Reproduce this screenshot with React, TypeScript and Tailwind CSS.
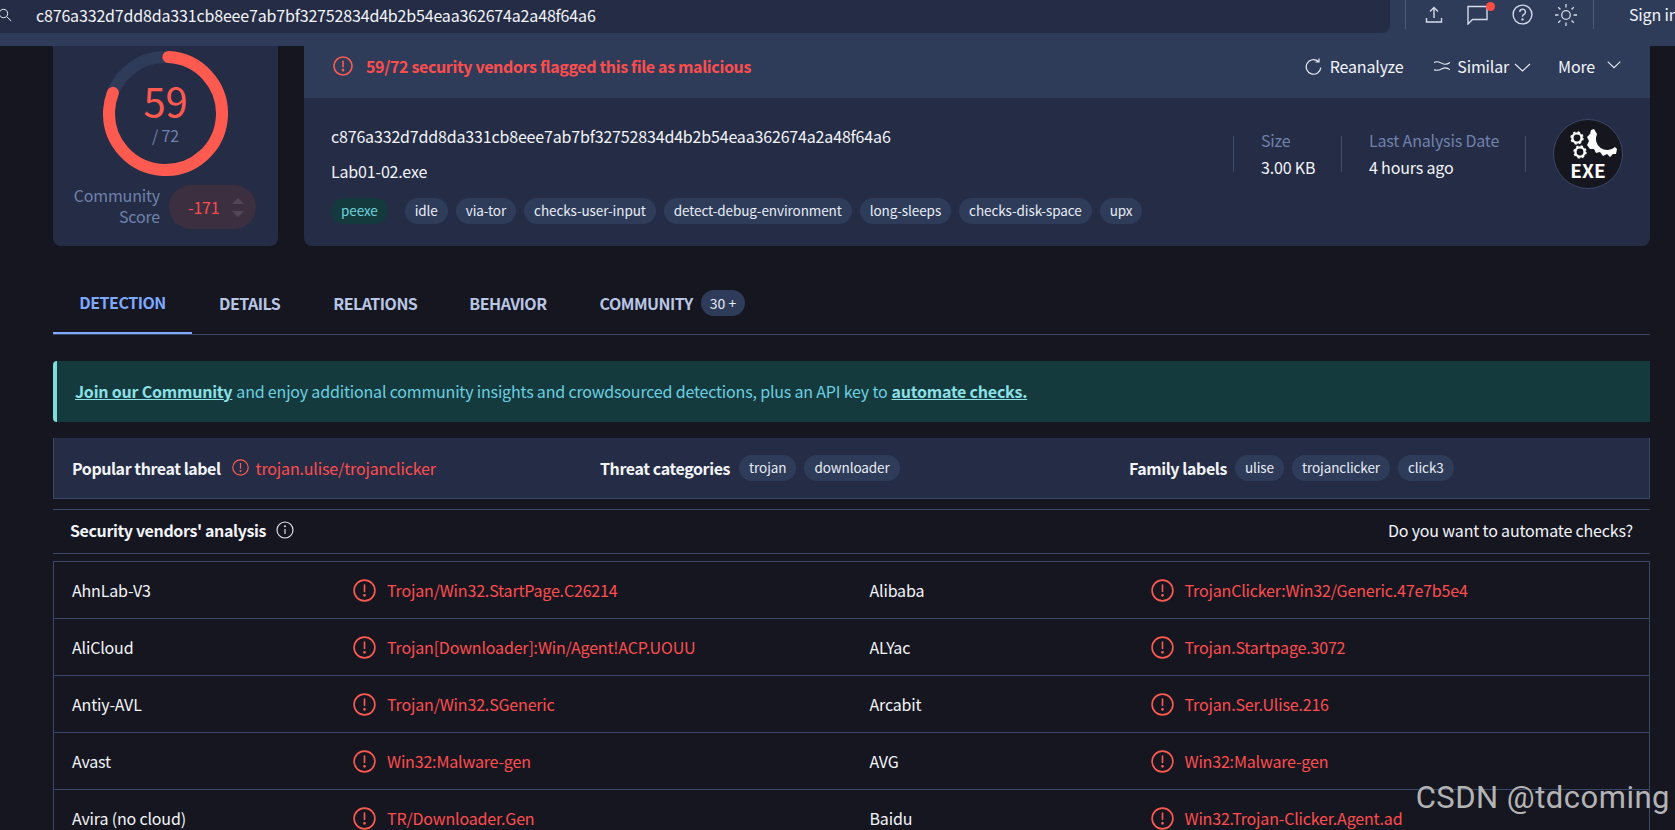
import React from "react";

const font = { fontFamily: '"Noto Sans CJK SC", "Noto Sans", sans-serif' };
const hash = "c876a332d7dd8da331cb8eee7ab7bf32752834d4b2b54eaa362674a2a48f64a6";

function Alert({ size = 23, sw = 1.6 }: { size?: number; sw?: number }) {
  return (
    <svg width={size} height={size} viewBox="0 0 23 23" fill="none" stroke="#ff5a50" strokeWidth={sw * 23 / size} className="shrink-0">
      <circle cx="11.5" cy="11.5" r="10.4" />
      <path d="M11.5 6v6.5" strokeLinecap="round" />
      <circle cx="11.5" cy="16.3" r="0.6" fill="#ff5a50" />
    </svg>
  );
}

function Tag({ children, teal }: { children: React.ReactNode; teal?: boolean }) {
  return (
    <span className={`flex h-[26px] items-center rounded-full px-[10px] text-[13.5px] leading-none tracking-[-0.09px] ${teal ? "bg-[#153a3e] text-[#6fd3dc]" : "bg-[#2e3c5a] text-[#e8ecf5]"}`}>
      {children}
    </span>
  );
}

const rows = [
  ["AhnLab-V3", "Trojan/Win32.StartPage.C26214", "Alibaba", "TrojanClicker:Win32/Generic.47e7b5e4"],
  ["AliCloud", "Trojan[Downloader]:Win/Agent!ACP.UOUU", "ALYac", "Trojan.Startpage.3072"],
  ["Antiy-AVL", "Trojan/Win32.SGeneric", "Arcabit", "Trojan.Ser.Ulise.216"],
  ["Avast", "Win32:Malware-gen", "AVG", "Win32:Malware-gen"],
  ["Avira (no cloud)", "TR/Downloader.Gen", "Baidu", "Win32.Trojan-Clicker.Agent.ad"],
];

function Cell({ name, result }: { name: string; result: string }) {
  return (
    <div className="flex items-center pl-[18px]">
      <span className="w-[281px] text-[#f2f4f8]">{name}</span>
      <Alert />
      <span className="ml-[11px] text-[#ff4d4d]">{result}</span>
    </div>
  );
}

function TopBar() {
  return (
    <header className="flex h-[46px] shrink-0 items-start overflow-hidden bg-[#2e3c5a]">
      <div className="flex h-[33px] w-[1390px] shrink-0 items-center rounded-br-lg bg-[#252c45] pb-[4px] text-[16px] text-[#f2f4f8]">
        <svg width="14" height="14" viewBox="0 0 14 14" fill="none" stroke="#e8ecf5" strokeWidth="1" className="-ml-[2px] mr-[24px]">
          <circle cx="5.5" cy="5.5" r="4.2" />
          <path d="M8.6 8.6l4.6 4.4" />
        </svg>
        <span>{hash}</span>
      </div>
      <div className="ml-[15px] flex h-[29px] shrink-0 items-center border-x border-[#4a5a7d] text-[#e8ecf5]">
        <div className="flex w-[187px] items-center pl-[18px]">
          <svg width="20" height="20" viewBox="0 0 20 20" fill="none" stroke="#d5dbe8" strokeWidth="1.4">
            <path d="M10 13V3M6 6.5L10 2.6l4 3.9M2.500 13v4h15v-4" />
          </svg>
          <span className="relative ml-[23px] block h-[20px] w-[22px]">
            <svg width="22" height="20" viewBox="0 0 22 20" fill="none" stroke="#d5dbe8" strokeWidth="1.4" className="absolute left-0 top-0">
              <path d="M1 1.500h19v13H5.500L1 19z" />
            </svg>
            <span className="absolute -right-[6px] -top-[3px] h-[9px] w-[9px] rounded-full bg-[#ff4d43]" />
          </span>
          <svg width="21" height="21" viewBox="0 0 21 21" fill="none" stroke="#d5dbe8" strokeWidth="1.4" className="ml-[23px]">
            <circle cx="10.5" cy="10.5" r="9.4" />
            <path d="M7.800 8a2.800 2.800 0 1 1 4.200 2.400c-1 .6-1.500 1.100-1.500 2.300" />
            <circle cx="10.5" cy="15.4" r=".5" fill="#d5dbe8" />
          </svg>
          <svg width="24" height="24" viewBox="0 0 24 24" fill="none" stroke="#d5dbe8" strokeWidth="1.3" className="ml-[21px]">
            <circle cx="12" cy="12" r="4.3" />
            <path d="M12 1v3.500M12 19.500V23M1 12h3.500M19.500 12H23M4.200 4.200L6.500 6.500M17.500 17.500l2.300 2.300M4.200 19.800l2.300-2.300M17.500 6.500l2.300-2.300" />
          </svg>
        </div>
      </div>
      <span className="ml-[35px] mt-[1px] shrink-0 whitespace-nowrap text-[16px] leading-[27px] text-[#f2f4f8]">Sign in</span>
    </header>
  );
}

function ScoreCard() {
  const r = 56.5;
  const c = 2 * Math.PI * r;
  return (
    <section className="flex w-[225px] shrink-0 flex-col items-center rounded-b-lg bg-[#252c45]">
      <div className="relative mt-[5px] h-[125px] w-[125px]">
        <svg width="125" height="125" viewBox="0 0 125 125" fill="none" strokeWidth="12">
          <circle cx="62.500" cy="62.500" r={r} stroke="#2e3c5a" />
          <circle cx="62.500" cy="62.500" r={r} stroke="#ff5a50" strokeLinecap="round" strokeDasharray={`${c * 0.8}  ${c}`} transform="rotate(-87 62.500 62.500)" />
        </svg>
        <div className="absolute inset-0 flex flex-col items-center">
          <span className="mt-[29px] text-[40px] leading-[40px] text-[#ff5a50]">59</span>
          <span className="mt-[5px] text-[16px] leading-[20px] text-[#6f82ad]">/ 72</span>
        </div>
      </div>
      <div className="mt-[9px] flex w-full items-center">
        <div className="-mt-[2px] w-[107px] text-right text-[16px] leading-[21px] text-[#6f82ad]">
          Community<br />Score
        </div>
        <div className="ml-[9px] flex h-[44px] w-[87px] items-center rounded-full bg-[#3b2f40] pl-[19px]">
          <span className="w-[44px] text-[16px] text-[#ff4d4d]">-171</span>
          <span className="flex flex-col gap-[7px]">
            <span className="h-0 w-0 border-x-[6px] border-b-[6px] border-x-transparent border-b-[#55465a]" />
            <span className="h-0 w-0 border-x-[6px] border-t-[6px] border-x-transparent border-t-[#55465a]" />
          </span>
        </div>
      </div>
    </section>
  );
}

function Gear({ cx, cy }: { cx: number; cy: number }) {
  return (
    <g fill="none" stroke="#fff">
      <circle cx={cx} cy={cy} r="4.6" strokeWidth="2.4" />
      <circle cx={cx} cy={cy} r="6" strokeWidth="1.4" strokeDasharray="2.400 2.300" />
    </g>
  );
}

function ExeIcon() {
  return (
    <div className="relative mt-[1px] flex h-[70px] w-[70px] shrink-0 flex-col items-center justify-end rounded-full border border-[#3a4768] bg-[#16161f] pb-[10px]">
      <svg width="69" height="69" viewBox="0 0 69 69" className="absolute -left-px -top-px">
        <Gear cx={24} cy={19} />
        <Gear cx={27} cy={33} />
        <path fill="#fff" d="M41 10L38 11L37 15L34 18L36 22L34 26L37 30L41 30L43 34L47 33L50 37L54 35L57 38L60 35L63 35L64 30L62 28A11.300 11.300 0 0 1 44 15Z" />
      </svg>
      <span className="text-[19px] font-bold leading-[17px] tracking-normal text-white">EXE</span>
    </div>
  );
}

function FileCard() {
  const tags = ["idle", "via-tor", "checks-user-input", "detect-debug-environment", "long-sleeps", "checks-disk-space", "upx"];
  return (
    <section className="flex flex-1 flex-col overflow-hidden rounded-b-lg bg-[#252c45]">
      <div className="flex h-[52px] shrink-0 items-center bg-[#2e3c5a] pb-[12px] pl-[29px] text-[#f2f4f8]">
        <Alert size={20} />
        <span className="ml-[13px] font-semibold tracking-[-0.36px] text-[#ff4d4d]">59/72 security vendors flagged this file as malicious</span>
        <div className="ml-auto flex items-center">
          <svg width="17" height="17" viewBox="0 0 17 17" fill="none" stroke="#e8ecf5" strokeWidth="1.2">
            <path d="M15.800 9.500A7.300 7.300 0 1 1 13.200 3.300M14 .5v3.500h-3.500" />
          </svg>
          <span className="ml-[8px]">Reanalyze</span>
          <svg width="18" height="12" viewBox="0 0 18 12" fill="none" stroke="#e8ecf5" strokeWidth="1.1" className="ml-[30px]">
            <path d="M1 2.500c3-1.500 5-1 8 .9s5 1.100 8-.9M1 9.800c3 1.200 5 .6 8-1.100s5-1.100 8 .9" />
          </svg>
          <span className="ml-[6px]">Similar</span>
          <svg width="17" height="9" viewBox="0 0 17 9" fill="none" stroke="#e8ecf5" strokeWidth="1.1" className="ml-[5px] mt-[3px]">
            <path d="M1 1l7.500 7 7.500-7" />
          </svg>
          <span className="ml-[27px]">More</span>
          <svg width="14" height="8" viewBox="0 0 14 8" fill="none" stroke="#e8ecf5" strokeWidth="1.1" className="-mt-[2px] ml-[12px] mr-[29px]">
            <path d="M.7 .7l6.300 6 6.300-6" />
          </svg>
        </div>
      </div>
      <div className="flex flex-1 pl-[27px]">
        <div className="flex flex-col">
          <div className="mt-[25px] text-[16px] leading-[26px] text-[#f2f4f8]">{hash}</div>
          <div className="mt-[9px] text-[16px] leading-[26px] text-[#f2f4f8]">Lab01-02.exe</div>
          <div className="mt-[14px] flex gap-[8px]">
            <span className="mr-[9px]"><Tag teal>peexe</Tag></span>
            {tags.map((t) => <Tag key={t}>{t}</Tag>)}
          </div>
        </div>
        <div className="ml-auto mr-[27px] mt-[21px] flex h-[69px] items-center">
          <div className="flex h-[36px] w-[109px] flex-col justify-center border-x border-[#3f4c6d] pl-[27px] leading-[27px]">
            <span className="text-[#6f82ad]">Size</span>
            <span className="text-[#f2f4f8]">3.00 KB</span>
          </div>
          <div className="flex h-[36px] w-[184px] flex-col justify-center border-r border-[#3f4c6d] pl-[27px] leading-[27px]">
            <span className="whitespace-nowrap text-[#6f82ad]">Last Analysis Date</span>
            <span className="text-[#f2f4f8]">4 hours ago</span>
          </div>
          <div className="ml-[27px]"><ExeIcon /></div>
        </div>
      </div>
    </section>
  );
}

function Tabs() {
  return (
    <nav className="mt-[32px] flex h-[57px] items-start border-b border-[#3a4768] font-semibold tracking-[-0.5px] text-[#b9c6e4]">
      <span className="flex h-[56px] w-[139px] items-center justify-center border-b-2 border-[#7fa8ff] pb-[6px] text-[#7fa8ff]">DETECTION</span>
      <div className="flex h-[56px] items-center pb-[6px]">
        <span className="ml-[27px]">DETAILS</span>
        <span className="ml-[53px]">RELATIONS</span>
        <span className="ml-[52px]">BEHAVIOR</span>
        <span className="ml-[53px]">COMMUNITY</span>
        <span className="ml-[8px] flex h-[26px] items-center rounded-full bg-[#2e3c5a] px-[9px] text-[14px] font-normal tracking-normal text-[#e8ecf5]">30 +</span>
      </div>
    </nav>
  );
}

function App() {
  return (
    <div style={font} className="relative flex h-[830px] w-[1675px] flex-col overflow-hidden bg-[#161621] text-[16px] tracking-[-0.17px]">
      <TopBar />
      <main className="flex flex-col pl-[53px] pr-[25px]">
        <div className="flex h-[200px] gap-[26px]">
          <ScoreCard />
          <FileCard />
        </div>
        <Tabs />
        <div className="mt-[26px] flex h-[61px] items-center rounded-l border-l-4 border-[#7fdcdc] bg-[#153a3e] pb-[2px] pl-[18px] tracking-[-0.22px] text-[#6ccfe0]">
          <a className="font-bold text-[#8ce0e6] underline">Join our Community</a>
          <span className="ml-[4px] tracking-[-0.18px]">and enjoy additional community insights and crowdsourced detections, plus an API key to</span>
          <a className="ml-[4px] font-bold text-[#8ce0e6] underline">automate checks.</a>
        </div>
        <div className="mt-[16px] grid h-[61px] grid-cols-[528px_529px_1fr] items-center border-b border-l border-r border-[#3a4768] bg-[#252c45] pl-[18px] pb-[1px]">
          <div className="flex items-center">
            <span className="font-semibold tracking-[-0.44px] text-[#f2f4f8]">Popular threat label</span>
            <span className="ml-[11px]"><Alert size={17} sw={1.2} /></span>
            <span className="ml-[7px] text-[#ff4d4d]">trojan.ulise/trojanclicker</span>
          </div>
          <div className="flex items-center gap-[8px]">
            <span className="mr-[1px] font-semibold tracking-[-0.4px] text-[#f2f4f8]">Threat categories</span>
            <Tag>trojan</Tag>
            <Tag>downloader</Tag>
          </div>
          <div className="flex items-center gap-[8px]">
            <span className="font-semibold tracking-[-0.42px] text-[#f2f4f8]">Family labels</span>
            <Tag>ulise</Tag>
            <Tag>trojanclicker</Tag>
            <Tag>click3</Tag>
          </div>
        </div>
        <div className="mt-[10px] flex h-[45px] items-center justify-between border-y border-[#3a4768] pb-[3px] pl-[17px] pr-[17px] text-[#f2f4f8]">
          <div className="flex items-center">
            <span className="font-semibold tracking-[-0.38px]">Security vendors' analysis</span>
            <svg width="18" height="18" viewBox="0 0 18 18" fill="none" stroke="#e8ecf5" strokeWidth="1.1" className="ml-[10px]">
              <circle cx="9" cy="9" r="8" />
              <path d="M9 8v5" />
              <circle cx="9" cy="5.300" r=".4" fill="#e8ecf5" />
            </svg>
          </div>
          <span>Do you want to automate checks?</span>
        </div>
        <div className="mt-[7px] border-x border-t border-[#3a4768]">
          {rows.map((r) => (
            <div key={r[0]} className="grid h-[57px] grid-cols-2 border-b border-[#3a4768]">
              <Cell name={r[0]} result={r[1]} />
              <Cell name={r[2]} result={r[3]} />
            </div>
          ))}
        </div>
      </main>
      <div style={{ fontFamily: '"Roboto", sans-serif' }} className="absolute right-[5px] top-[778px] text-[31px] leading-[40px] tracking-[0.5px] text-[#b4b4b4]">
        CSDN @tdcoming
      </div>
    </div>
  );
}

export default App;
